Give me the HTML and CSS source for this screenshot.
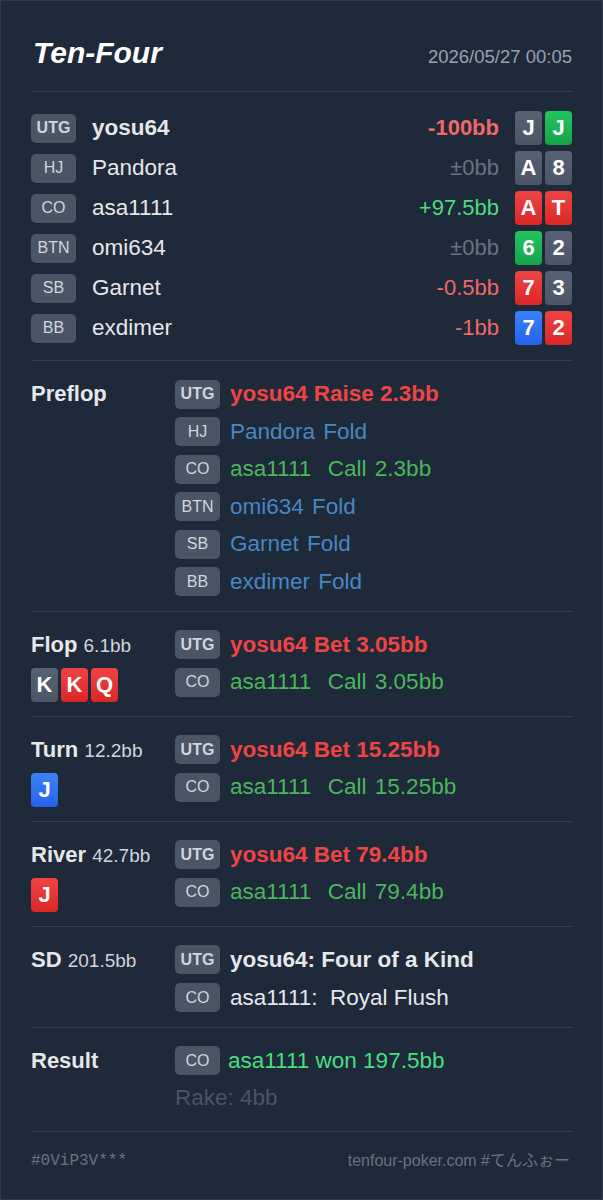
FILE: index.html
```html
<!DOCTYPE html>
<html lang="ja">
<head>
    <meta charset="UTF-8">
    <meta name="viewport" content="width=device-width, initial-scale=1.0">
    <title>Ten-Four</title>
    <link rel="stylesheet" href="styles.css">
</head>
<body>
    <div class="card">
        <header class="head">
            <h1 class="title">Ten-Four</h1>
            <span class="date">2026/05/27 00:05</span>
        </header>

        <section class="players">
            <div class="player">
                <span class="pos hero">UTG</span>
                <span class="name hero">yosu64</span>
                <span class="net loss hero">-100bb</span>
                <span class="hand"><span class="pc s">J</span><span class="pc c">J</span></span>
            </div>
            <div class="player">
                <span class="pos">HJ</span>
                <span class="name">Pandora</span>
                <span class="net even">±0bb</span>
                <span class="hand"><span class="pc s">A</span><span class="pc s">8</span></span>
            </div>
            <div class="player">
                <span class="pos">CO</span>
                <span class="name">asa1111</span>
                <span class="net gain">+97.5bb</span>
                <span class="hand"><span class="pc h">A</span><span class="pc h">T</span></span>
            </div>
            <div class="player">
                <span class="pos">BTN</span>
                <span class="name">omi634</span>
                <span class="net even">±0bb</span>
                <span class="hand"><span class="pc c">6</span><span class="pc s">2</span></span>
            </div>
            <div class="player">
                <span class="pos">SB</span>
                <span class="name">Garnet</span>
                <span class="net loss">-0.5bb</span>
                <span class="hand"><span class="pc h">7</span><span class="pc s">3</span></span>
            </div>
            <div class="player">
                <span class="pos">BB</span>
                <span class="name">exdimer</span>
                <span class="net loss">-1bb</span>
                <span class="hand"><span class="pc d">7</span><span class="pc h">2</span></span>
            </div>
        </section>

        <section class="street">
            <div class="street-info">
                <div class="street-name">Preflop</div>
            </div>
            <div class="actions">
                <div class="act"><span class="pos hero">UTG</span><span class="act-text raise">yosu64 Raise 2.3bb</span></div>
                <div class="act"><span class="pos">HJ</span><span class="act-text fold">Pandora Fold</span></div>
                <div class="act"><span class="pos">CO</span><span class="act-text call">asa1111&nbsp; Call 2.3bb</span></div>
                <div class="act"><span class="pos">BTN</span><span class="act-text fold">omi634&nbsp;Fold</span></div>
                <div class="act"><span class="pos">SB</span><span class="act-text fold">Garnet Fold</span></div>
                <div class="act"><span class="pos">BB</span><span class="act-text fold">exdimer Fold</span></div>
            </div>
        </section>

        <section class="street">
            <div class="street-info">
                <div class="street-name">Flop <span class="pot">6.1bb</span></div>
                <div class="board"><span class="pc s">K</span><span class="pc h">K</span><span class="pc h">Q</span></div>
            </div>
            <div class="actions">
                <div class="act"><span class="pos hero">UTG</span><span class="act-text raise">yosu64 Bet 3.05bb</span></div>
                <div class="act"><span class="pos">CO</span><span class="act-text call">asa1111&nbsp; Call 3.05bb</span></div>
            </div>
        </section>

        <section class="street">
            <div class="street-info">
                <div class="street-name">Turn <span class="pot">12.2bb</span></div>
                <div class="board"><span class="pc d">J</span></div>
            </div>
            <div class="actions">
                <div class="act"><span class="pos hero">UTG</span><span class="act-text raise">yosu64 Bet 15.25bb</span></div>
                <div class="act"><span class="pos">CO</span><span class="act-text call">asa1111&nbsp; Call 15.25bb</span></div>
            </div>
        </section>

        <section class="street">
            <div class="street-info">
                <div class="street-name">River <span class="pot">42.7bb</span></div>
                <div class="board"><span class="pc h">J</span></div>
            </div>
            <div class="actions">
                <div class="act"><span class="pos hero">UTG</span><span class="act-text raise">yosu64 Bet 79.4bb</span></div>
                <div class="act"><span class="pos">CO</span><span class="act-text call">asa1111&nbsp; Call 79.4bb</span></div>
            </div>
        </section>

        <section class="street">
            <div class="street-info">
                <div class="street-name">SD <span class="pot">201.5bb</span></div>
            </div>
            <div class="actions actions-sd">
                <div class="act"><span class="pos hero">UTG</span><span class="act-text show hero">yosu64: Four of a Kind</span></div>
                <div class="act"><span class="pos">CO</span><span class="act-text show">asa1111:&nbsp; Royal Flush</span></div>
            </div>
        </section>

        <section class="street street-result">
            <div class="street-info">
                <div class="street-name">Result</div>
            </div>
            <div class="actions">
                <div class="act"><span class="pos">CO</span><span class="act-text won">asa1111 won 197.5bb</span></div>
                <div class="act"><span class="rake">Rake: 4bb</span></div>
            </div>
        </section>

        <footer class="foot">
            <span class="hand-id">#0ViP3V***</span>
            <span class="site">tenfour-poker.com #てんふぉー</span>
        </footer>
    </div>
</body>
</html>
```

FILE: styles.css
```css
html, body {
    margin: 0;
    padding: 0;
    background: #1e2939;
}
body {
    font-family: "Liberation Sans", Arial, "Noto Sans CJK JP", sans-serif;
    color: #e5e7eb;
}
.card {
    box-sizing: border-box;
    width: 603px;
    min-height: 1200px;
    padding: 0 30px;
    border: 1px solid #2f3b4c;
    background: #1e2939;
}

/* header */
.head {
    display: flex;
    justify-content: space-between;
    align-items: baseline;
    padding: 34px 0 20px;
    border-bottom: 1px solid #364153;
}
.title {
    margin: 0 0 0 2px;
    font-size: 30px;
    line-height: 36px;
    font-weight: bold;
    font-style: italic;
    color: #fff;
}
.date {
    font-size: 18.5px;
    color: #99a1af;
}

/* position badge */
.pos {
    flex: none;
    width: 45px;
    height: 29px;
    display: flex;
    align-items: center;
    justify-content: center;
    background: #4a5565;
    border-radius: 5px;
    font-size: 16px;
    color: #d1d5dc;
}
.pos.hero {
    font-weight: bold;
}

/* playing card */
.pc {
    width: 27px;
    height: 34px;
    display: inline-flex;
    align-items: center;
    justify-content: center;
    border-radius: 4px;
    font-size: 22px;
    font-weight: bold;
    color: #fff;
}
.pc.s { background: linear-gradient(#576175, #4a5565); }
.pc.h { background: linear-gradient(#ef4444, #dc2626); }
.pc.d { background: linear-gradient(#3b82f6, #2563eb); }
.pc.c { background: linear-gradient(#22c55e, #16a34a); }

/* players */
.players {
    display: flex;
    flex-direction: column;
    gap: 6px;
    padding: 19px 0 15px;
}
.player {
    display: flex;
    align-items: center;
    height: 34px;
}
.name {
    flex: 1;
    margin-left: 16px;
    font-size: 22.5px;
}
.name.hero {
    font-weight: bold;
}
.net {
    font-size: 22px;
    margin-right: 16px;
}
.net.hero { font-weight: bold; }
.loss { color: #f06868; }
.even { color: #6a7282; }
.gain { color: #4ade80; }
.hand {
    display: flex;
    gap: 3px;
}

/* streets */
.street {
    display: grid;
    grid-template-columns: 144px 1fr;
    padding: 18px 0 14px;
    border-top: 1px solid #364153;
}
.street-result {
    padding-bottom: 18px;
}
.street-name {
    height: 30px;
    line-height: 30px;
    font-size: 22px;
    font-weight: bold;
}
.pot {
    font-size: 19px;
    font-weight: normal;
    color: #d1d5dc;
}
.board {
    display: flex;
    gap: 3px;
    margin-top: 8px;
}
.actions {
    display: flex;
    flex-direction: column;
    gap: 7.5px;
}
.actions-sd {
    gap: 8px;
}
.act {
    display: flex;
    align-items: center;
    height: 30px;
}
.act-text {
    margin-left: 10px;
    font-size: 22.5px;
    word-spacing: 2px;
    white-space: nowrap;
}
.raise { color: #ef4444; font-weight: bold; word-spacing: 0; }
.fold { color: #4a85c4; }
.call { color: #4cb65e; }
.won { color: #4ade80; margin-left: 8px; word-spacing: 0; }
.show { color: #e5e7eb; word-spacing: 0; }
.show.hero { font-weight: bold; }
.rake {
    font-size: 22.5px;
    color: #4a5565;
}

/* footer */
.foot {
    display: flex;
    justify-content: space-between;
    padding: 19px 0 17px;
    border-top: 1px solid #364153;
    font-size: 16px;
    line-height: 20px;
    color: #6a7282;
}
.hand-id {
    font-family: "Liberation Mono", "DejaVu Sans Mono", monospace;
}
.site {
    margin-right: 2px;
}
```
